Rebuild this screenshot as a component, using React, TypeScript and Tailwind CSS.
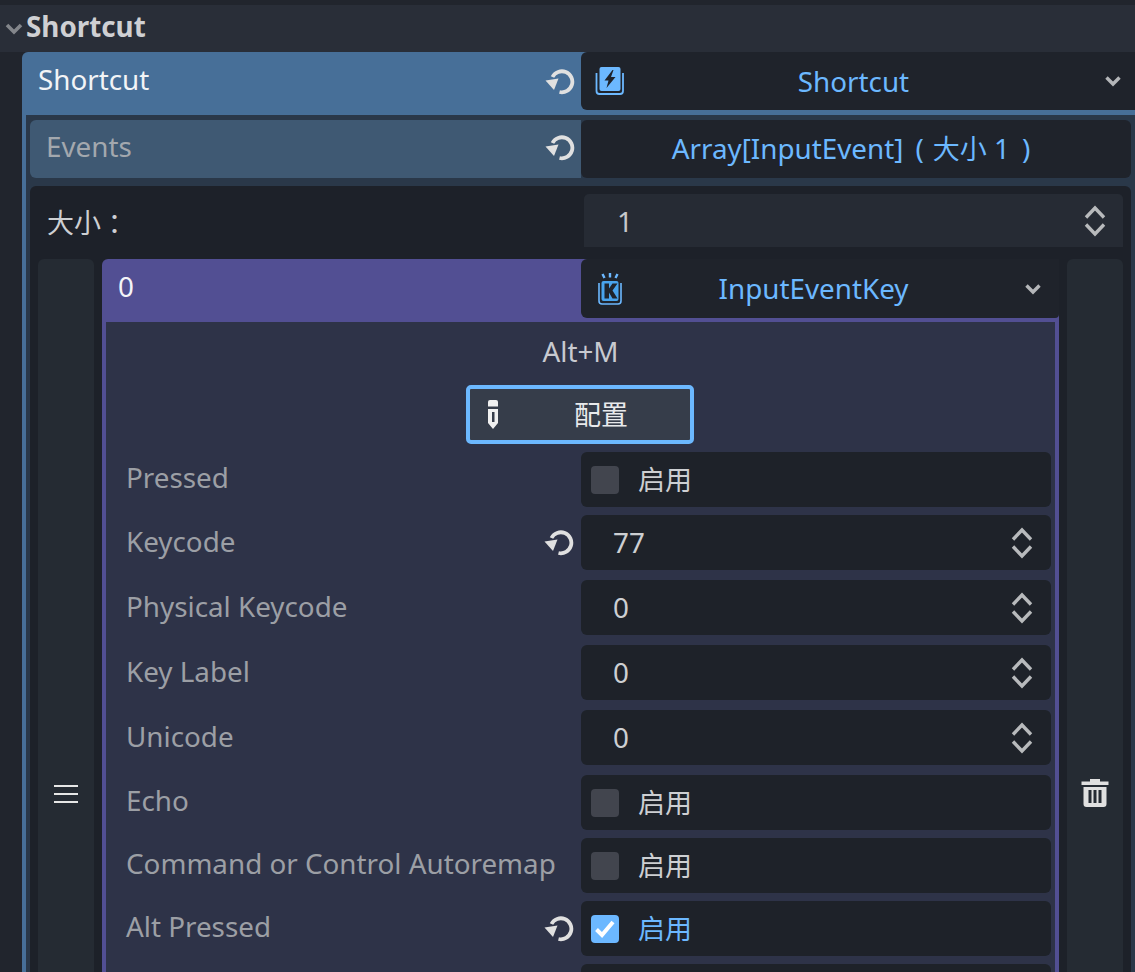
import React from "react";

const FONT = { fontFamily: '"Noto Sans", "Noto Sans CJK SC", sans-serif' };
const TC = { fontFamily: '"Noto Sans CJK TC", sans-serif' };

function Reset() {
  return (
    <svg width="30" height="30" viewBox="0 0 30 30" className="block">
      <path d="M14.5 26 A10.5 10.5 0 1 0 7.5 11" fill="none" stroke="#e0e0e0" strokeWidth="3.8" />
      <path d="M0.5 14.5 L13.5 12.5 L9 24 Z" fill="#e0e0e0" />
    </svg>
  );
}

function Chevron() {
  return (
    <svg width="18" height="14" viewBox="0 0 18 14" className="block">
      <path d="M2.5 3.5 L9 10 L15.5 3.5" fill="none" stroke="#b4b6b9" strokeWidth="3.4" />
    </svg>
  );
}

function Stepper() {
  return (
    <svg width="24" height="32" viewBox="0 0 24 32" className="block">
      <path d="M3 12.5 L12 3 L21 12.5 M3 19.5 L12 29 L21 19.5" fill="none" stroke="#b8babc" strokeWidth="3.4" />
    </svg>
  );
}

function ShortcutIcon() {
  return (
    <svg width="30" height="30" viewBox="0 0 30 30" className="block">
      <path d="M1.5 7 V25 Q1.5 28 4.5 28 H25 Q28 28 28 25 V7" fill="none" stroke="#6cb8ff" strokeWidth="1.8" />
      <rect x="4.5" y="1" width="21" height="24" rx="2" fill="#6cb8ff" />
      <path d="M17.5 4 L9.5 14.5 H13.5 L11.5 22 L20.5 11 H16 L18.5 4 Z" fill="#1f232b" />
    </svg>
  );
}

function KeyIcon() {
  return (
    <svg width="28" height="34" viewBox="0 0 28 34" className="block">
      <path d="M6.5 2 L8.5 6 M14 1 V5.5 M21.5 2 L19.5 6" stroke="#6cb8ff" strokeWidth="2.4" fill="none" />
      <path d="M3 11 V29 Q3 32 6 32 H22 Q25 32 25 29 V11" fill="none" stroke="#6cb8ff" strokeWidth="1.6" />
      <rect x="5.5" y="9" width="17" height="20" rx="2" fill="#49a3ec" />
      <path d="M8.5 11.5 H13 V16.5 L16.5 11.5 H21.5 L16.5 18.5 L21.5 26.5 H16.5 L13 20.5 V26.5 H8.5 Z" fill="#1f232b" />
    </svg>
  );
}

function Pencil() {
  return (
    <svg width="10" height="30" viewBox="0 0 10 30" className="block">
      <path d="M0 9 H10 V23 L5 29 L0 23 Z M4 12 V22 H6.5 V12 Z" fill="#f0f0f0" fillRule="evenodd" />
      <path d="M0 2 Q0 0 2 0 H8 Q10 0 10 2 V6.5 H0 Z" fill="#f0f0f0" />
    </svg>
  );
}

function Trash() {
  return (
    <svg width="28" height="30" viewBox="0 0 28 30" className="block">
      <path d="M0.5 3.5 H9 V1 H19 V3.5 H27.5 V7 H0.5 Z" fill="#e0e0e0" />
      <path d="M2.5 9 H25.5 V26 Q25.5 29 22.5 29 H5.5 Q2.5 29 2.5 26 Z M7.5 12 V25 H10.5 V12 Z M12.5 12 V25 H15.5 V12 Z M17.5 12 V25 H20.5 V12 Z" fill="#e0e0e0" fillRule="evenodd" />
    </svg>
  );
}

function Menu() {
  return (
    <svg width="24" height="18" viewBox="0 0 24 18" className="block">
      <path d="M0 1 H24 M0 9 H24 M0 17 H24" stroke="#e6e6e6" strokeWidth="2" />
    </svg>
  );
}

function Check({ on }: { on?: boolean }) {
  return on ? (
    <div className="w-[28px] h-[28px] rounded-[4px] bg-[#6cb8ff] flex items-center justify-center">
      <svg width="22" height="20" viewBox="0 0 22 20">
        <path d="M2.5 10.5 L8 16 L19 3" fill="none" stroke="#ffffff" strokeWidth="4" />
      </svg>
    </div>
  ) : (
    <div className="w-[28px] h-[28px] rounded-[4px] bg-[#42454e]" />
  );
}

function Row({ label, kind, value, reset, on, mt }: { label: string; kind: "check" | "num"; value?: string; reset?: boolean; on?: boolean; mt: string }) {
  return (
    <div className={`${mt} flex h-[55px] pl-[20px] pr-[4px]`}>
      <div className="flex-1 flex items-center text-[#9c9fa5] text-[27.8px] leading-none whitespace-nowrap">
        <span className={`flex-1 ${kind === "num" ? "-mt-[2px]" : "-mt-[4px]"}`}>{label}</span>
        {reset && <span className="mr-[7px] -mt-[1px]"><Reset /></span>}
      </div>
      <div className="w-[470px] h-[55px] rounded-[6px] bg-[#1e2229] flex items-center">
        {kind === "check" ? (
          <>
            <span className="ml-[10px]"><Check on={on} /></span>
            <span className={`ml-[19px] mt-[2px] text-[27px] ${on ? "text-[#6cb8ff]" : "text-[#cdcfd2]"}`}>启用</span>
          </>
        ) : (
          <>
            <span className="ml-[32px] flex-1 text-[#cdcfd2] text-[27.8px] leading-none">{value}</span>
            <span className="mr-[17px]"><Stepper /></span>
          </>
        )}
      </div>
    </div>
  );
}

export default function App() {
  return (
    <div className="w-[1135px] h-[972px] overflow-hidden flex flex-col bg-[#21252d]" style={FONT}>
      <div className="h-[5px] bg-[#21252d]" />
      <div className="h-[47px] flex items-center bg-[#292e38]">
        <svg width="18" height="14" viewBox="0 0 18 14" className="ml-[5px]">
          <path d="M2 3 L9 10 L16 3" fill="none" stroke="#83868b" strokeWidth="3.6" />
        </svg>
        <span className="ml-[3px] text-[27.8px] font-bold text-[#cfd0d3] leading-none -mt-[3px]">Shortcut</span>
      </div>

      <div className="flex-1 min-h-0 ml-[22px] flex flex-col">
        <div className="h-[63px] shrink-0 flex bg-[#476f98] rounded-t-[6px]">
          <div className="flex-1 flex items-center pl-[16px] pb-[6px] text-[27.8px] leading-none text-[#f2f4f6]">
            <span className="flex-1 -mt-[1px]">Shortcut</span>
            <span className="mr-[6px]"><Reset /></span>
          </div>
          <div className="w-[554px] h-[58px] rounded-bl-[6px] rounded-tl-[6px] bg-[#1f232b] flex items-center pl-[14px] pr-[13px]">
            <ShortcutIcon />
            <span className="flex-1 text-center text-[27.8px] leading-none text-[#6cb8ff] -ml-[22px] mt-[1px]">Shortcut</span>
            <Chevron />
          </div>
        </div>

        <div className="flex-1 min-h-0 border-l-[4px] border-[#476f98] bg-[#2a3849] pt-[5px] pl-[4px] pr-[4px]">
          <div className="h-[58px] flex">
            <div className="flex-1 bg-[#3f5973] rounded-l-[6px] flex items-center pl-[17px] text-[#a3a8ae] text-[27.8px] leading-none">
              <span className="flex-1 -mt-[5px] -ml-[1px]">Events</span>
              <span className="mr-[6px] -mt-[4px]"><Reset /></span>
            </div>
            <div className="w-[550px] bg-[#1f232b] rounded-[6px] flex items-center justify-center pr-[10px] text-[27.8px] leading-none text-[#6cb8ff] whitespace-nowrap">
              <span className="-mt-[1px]">Array[InputEvent]<span className="ml-[12px] mr-[9px]">(</span><span className="text-[27px]">大小</span> 1<span className="ml-[12px]">)</span></span>
            </div>
          </div>

          <div className="mt-[8px] bg-[#1d2129] rounded-t-[6px] pt-[8px] px-[8px] h-[900px]">
            <div className="h-[53px] flex">
              <div className="flex-1 flex items-center pl-[9px] pt-[5px] text-[27px] text-[#cdcfd2]">大小<span style={TC}>：</span></div>
              <div className="w-[539px] bg-[#262b34] rounded-t-[5px] flex items-center">
                <span className="ml-[33px] flex-1 text-[27.8px] leading-none text-[#c6c8cb] mt-[2px]">1</span>
                <span className="mr-[16px]"><Stepper /></span>
              </div>
            </div>

            <div className="mt-[12px] flex gap-[8px] h-[800px]">
              <div className="w-[56px] shrink-0 bg-[#252b33] rounded-t-[6px] flex justify-center pt-[526px]">
                <Menu />
              </div>

              <div className="flex-1 flex flex-col">
                <div className="h-[63px] shrink-0 flex bg-[#524f93] rounded-t-[6px]">
                  <div className="flex-1 flex items-start pt-[14px] pl-[16px] text-[27.8px] leading-none text-[#f4f4f8]">0</div>
                  <div className="w-[478px] h-[59px] rounded-l-[6px] rounded-br-[4px] bg-[#1f232b] flex items-center pl-[15px] pr-[17px]">
                    <KeyIcon />
                    <span className="flex-1 text-center text-[27.8px] leading-none text-[#6cb8ff] -ml-[21px]">InputEventKey</span>
                    <Chevron />
                  </div>
                </div>

                <div className="flex-1 border-x-[4px] border-[#524f93] bg-[#2e3348]">
                  <div className="h-[63px] flex items-center justify-center text-[27.8px] leading-none text-[#c8cad0] pb-[3px]">Alt+M</div>
                  <div className="ml-[360px] w-[228px] h-[59px] border-[4px] border-[#6cb8ff] rounded-[5px] bg-[#363d4a] flex items-center pl-[18px] text-[27px] text-[#e8e9eb]">
                    <Pencil />
                    <span className="ml-[76px] mt-[2px]">配置</span>
                  </div>
                  <Row mt="mt-[8px]" label="Pressed" kind="check" />
                  <Row mt="mt-[8px]" label="Keycode" kind="num" value="77" reset />
                  <Row mt="mt-[10px]" label="Physical Keycode" kind="num" value="0" />
                  <Row mt="mt-[10px]" label="Key Label" kind="num" value="0" />
                  <Row mt="mt-[10px]" label="Unicode" kind="num" value="0" />
                  <Row mt="mt-[10px]" label="Echo" kind="check" />
                  <Row mt="mt-[8px]" label="Command or Control Autoremap" kind="check" />
                  <Row mt="mt-[8px]" label="Alt Pressed" kind="check" on reset />
                  <Row mt="mt-[8px]" label="" kind="num" value="" />
                </div>
              </div>

              <div className="w-[56px] shrink-0 bg-[#252b33] rounded-t-[6px] flex justify-center pt-[519px]">
                <span><Trash /></span>
              </div>
            </div>
          </div>
        </div>
      </div>
    </div>
  );
}
